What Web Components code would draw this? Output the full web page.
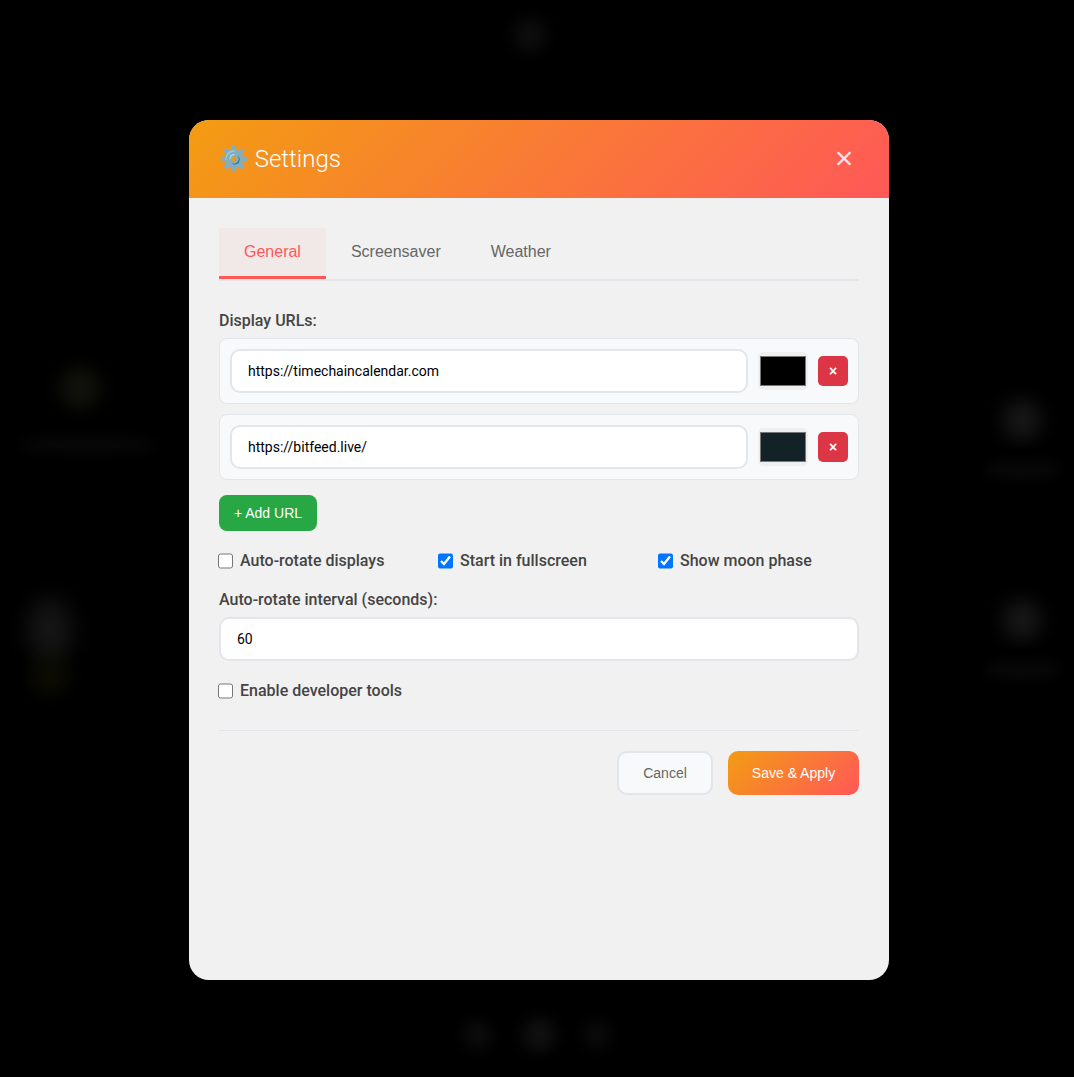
<!DOCTYPE html>
<html lang="en">
<head>
<meta charset="utf-8">
<title>Settings</title>
<style>
  html, body { margin: 0; height: 100%; background: #000; overflow: hidden; }
</style>
</head>
<body>
<settings-page>
  <blurred-desktop slot="desktop"></blurred-desktop>
  <settings-modal heading="⚙️ Settings">
    <settings-tabs slot="tabs" active="General" tabs="General,Screensaver,Weather"></settings-tabs>
    <field-label>Display URLs:</field-label>
    <url-row url="https://timechaincalendar.com" color="#000000"></url-row>
    <url-row url="https://bitfeed.live/" color="#132226"></url-row>
    <add-button>+ Add URL</add-button>
    <check-row>
      <check-box>Auto-rotate displays</check-box>
      <check-box checked>Start in fullscreen</check-box>
      <check-box checked>Show moon phase</check-box>
    </check-row>
    <field-label>Auto-rotate interval (seconds):</field-label>
    <number-field value="60"></number-field>
    <check-box solo>Enable developer tools</check-box>
    <modal-footer slot="footer"></modal-footer>
  </settings-modal>
</settings-page>

<script>
const define = (name, css, html, setup) => {
  customElements.define(name, class extends HTMLElement {
    connectedCallback() {
      if (this.shadowRoot) return;
      const root = this.attachShadow({ mode: "open" });
      root.innerHTML = `<style>${css}</style>${typeof html === "function" ? html(this) : html}`;
      if (setup) setup(this, root);
    }
  });
};

define("settings-page", `
  :host { display: block; position: relative; width: 1074px; height: 1077px; padding: 120px 0 0 189px; box-sizing: border-box; }
`, `<slot name="desktop"></slot><slot></slot>`);

// the dashboard behind the modal, blurred almost to nothing
const blobs = [
  [60, 368, 40, 40, "#12120c", 9],
  [20, 436, 135, 18, "#070707", 6],
  [514, 19, 32, 32, "#0e0e0e", 8],
  [1002, 400, 40, 40, "#161616", 9],
  [985, 461, 75, 18, "#080808", 6],
  [1002, 600, 40, 40, "#161616", 9],
  [985, 661, 75, 18, "#080808", 6],
  [28, 598, 44, 66, "#151515", 11],
  [32, 660, 36, 32, "#0e0e04", 9],
  [464, 1021, 28, 28, "#0c0c0c", 7],
  [522, 1018, 34, 34, "#0f0f0f", 7],
  [584, 1022, 26, 26, "#0b0b0b", 7],
];

define("blurred-desktop", `
  :host { display: block; position: absolute; inset: 0; overflow: hidden; }
  i { position: absolute; display: block; border-radius: 50%; }
`, () => blobs.map(([x, y, w, h, c, b]) =>
  `<i style="left:${x}px;top:${y}px;width:${w}px;height:${h}px;background:${c};filter:blur(${b}px)"></i>`).join(""));

define("settings-modal", `
  :host { display: block; position: relative; width: 700px; height: 860px; background: #f1f1f1; border-radius: 20px; overflow: hidden; }
  header {
    display: flex; align-items: center; justify-content: space-between;
    height: 78px; box-sizing: border-box; padding: 0 30px;
    background: linear-gradient(135deg, #f39c12, #ff5858); color: #fff;
  }
  h2 { margin: 0; font: 300 24px Roboto, "Noto Color Emoji", sans-serif; }
  button {
    width: 30px; height: 30px; padding: 0 0 2px; border: 0; background: none; color: rgba(255, 255, 255, .85);
    font: 32px/28px "Liberation Sans", sans-serif;
  }
  .body { padding: 30px; }
`, (el) => `
  <header>
    <h2>${el.getAttribute("heading")}</h2>
    <button type="button" aria-label="Close">×</button>
  </header>
  <div class="body">
    <slot name="tabs"></slot>
    <slot></slot>
    <slot name="footer"></slot>
  </div>`);

define("settings-tabs", `
  :host { display: flex; border-bottom: 2px solid #e2e5ea; margin-bottom: 30px; }
  div {
    box-sizing: border-box; height: 51px; padding: 0 25px;
    font: 16px/48px "Liberation Sans", sans-serif; color: #666;
    border-bottom: 3px solid transparent;
  }
  .on { color: #ff5858; background: rgba(255, 88, 88, .05); border-bottom-color: #ff5858; }
`, (el) => el.getAttribute("tabs").split(",").map((t) =>
  `<div class="${t === el.getAttribute("active") ? "on" : ""}">${t}</div>`).join(""));

define("field-label", `
  :host { display: block; font: 500 16px/19px Roboto, sans-serif; color: #444; margin-bottom: 8px; }
`, `<slot></slot>`);

const fieldCss = `
  input[type=text] {
    box-sizing: border-box; width: 100%; height: 44px; padding: 0 16px;
    border: 2px solid #e2e5ea; border-radius: 10px; background: #fff; outline: 0;
    font: 14px Roboto, sans-serif; color: #000;
  }
`;

define("url-row", `
  :host {
    display: flex; align-items: center; gap: 10px; box-sizing: border-box; height: 66px;
    padding: 10px; margin-bottom: 10px; background: #f8f9fa; border: 1px solid #e2e5ea; border-radius: 8px;
  }
  ${fieldCss}
  input[type=text] { flex: 1; width: auto; min-width: 0; }
  input[type=color] { width: 50px; height: 38px; padding: 0; border: 0; border-radius: 5px; background: #efefef; flex: none; }
  input[type=color]::-webkit-color-swatch-wrapper { padding: 4px 2px; }
  input[type=color]::-webkit-color-swatch { border: 1px solid #777; }
  button {
    width: 30px; height: 30px; flex: none; padding: 0; border: 0; border-radius: 5px;
    background: #dc3545; color: #fff; font: bold 14px "Liberation Sans", sans-serif;
  }
`, (el) => `
  <input type="text" value="${el.getAttribute("url")}">
  <input type="color" value="${el.getAttribute("color")}">
  <button type="button">×</button>`);

define("add-button", `
  :host {
    display: block; width: 98px; height: 36px; margin: 15px 0 0; box-sizing: border-box;
    background: #28a745; color: #fff; border-radius: 8px; text-align: center;
    font: 14px/36px "Liberation Sans", sans-serif;
  }
`, `<slot></slot>`);

define("check-row", `
  :host { display: grid; grid-template-columns: repeat(3, 1fr); gap: 20px; margin: 20px 0 19px; }
`, `<slot></slot>`);

define("check-box", `
  :host { display: flex; align-items: center; gap: 6.8px; margin-left: -1.3px; height: 20px; font: 500 16px/20px Roboto, sans-serif; color: #444; }
  :host([solo]) { margin-top: 20px; }
  input { width: 15.5px; height: 15.5px; margin: 0; accent-color: #0075ff; flex: none; }
`, (el) => `<input type="checkbox" ${el.hasAttribute("checked") ? "checked" : ""}><span><slot></slot></span>`);

define("number-field", `
  :host { display: block; }
  ${fieldCss}
`, (el) => `<input type="text" value="${el.getAttribute("value")}">`);

define("modal-footer", `
  :host {
    display: flex; justify-content: flex-end; gap: 15px;
    margin-top: 29px; padding-top: 20px; border-top: 1px solid #e2e5ea;
  }
  button {
    box-sizing: border-box; height: 44px; border-radius: 10px;
    font: 14px "Liberation Sans", sans-serif;
  }
  .cancel { width: 96px; background: #f8f9fa; border: 2px solid #e2e5ea; color: #666; }
  .save { width: 131px; border: 0; color: #fff; background: linear-gradient(135deg, #f39c12, #ff5858); }
`, `
  <button class="cancel" type="button">Cancel</button>
  <button class="save" type="button">Save &amp; Apply</button>`);
</script>
</body>
</html>
